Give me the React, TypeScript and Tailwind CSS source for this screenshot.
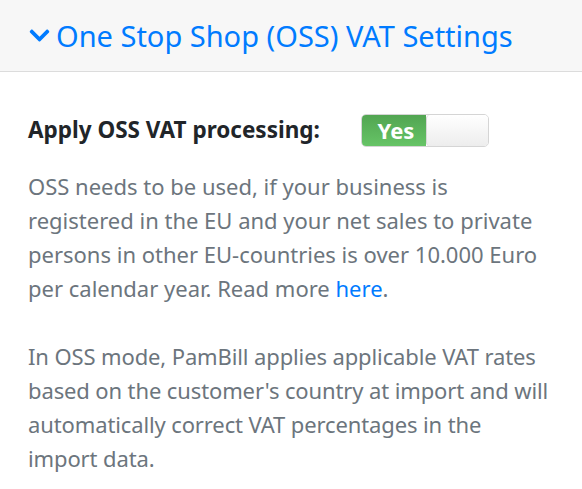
import { FaChevronDown } from "react-icons/fa";

export default function App() {
  return (
    <div className="min-h-screen bg-white font-['Noto_Sans',sans-serif]">
      {/* Header */}
      <div className="h-[72px] bg-[#f7f7f7] border-b border-[#dcdcdc] flex items-center pl-[28px]">
        <a className="flex items-center gap-[5px] text-[#007bff] text-[29px] leading-none cursor-pointer">
          <FaChevronDown className="w-[23px] h-[23px]" />
          <span>One Stop Shop (OSS) VAT Settings</span>
        </a>
      </div>

      {/* Body */}
      <div className="px-[28px] pt-[41px]">
        <div className="flex items-center h-[34px]">
          <span className="w-[333px] text-[22.5px] font-bold text-[#212529]">Apply OSS VAT processing:</span>
          <div className="flex w-[128px] h-[33px] rounded-[5px] border border-[#d5d5d5] overflow-hidden">
            <div className="w-[64px] bg-gradient-to-b from-[#52a552] to-[#66c466] text-white text-[22px] font-bold flex items-center justify-center pl-[4px]">
              Yes
            </div>
            <div className="flex-1 bg-gradient-to-b from-[#ffffff] to-[#ededed] rounded-l-[4px] border-l border-[#d8d8d8]" />
          </div>
        </div>

        <p className="mt-[22px] text-[22px] leading-[34px] text-[#6c757d]">
          OSS needs to be used, if your business is registered in the EU and your net sales to private
          persons in other EU-countries is over 10.000 Euro per calendar year. Read more{" "}
          <a className="text-[#007bff]">here</a>.
        </p>

        <p className="mt-[34px] text-[22px] leading-[34px] tracking-[-0.12px] text-[#6c757d]">
          In OSS mode, PamBill applies applicable VAT rates based on the customer's country at import
          and will automatically correct VAT percentages in the import data.
        </p>
      </div>
    </div>
  );
}
